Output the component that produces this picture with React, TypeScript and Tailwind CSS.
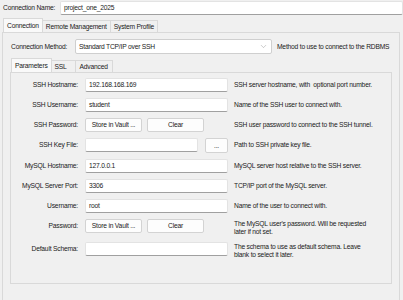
import { ChevronDown } from 'lucide-react';

const rows = [
  { label: 'SSH Hostname:', kind: 'input', value: '192.168.168.169', help: ['SSH server hostname, with  optional port number.'] },
  { label: 'SSH Username:', kind: 'input', value: 'student', help: ['Name of the SSH user to connect with.'] },
  { label: 'SSH Password:', kind: 'vault', help: ['SSH user password to connect to the SSH tunnel.'] },
  { label: 'SSH Key File:', kind: 'file', help: ['Path to SSH private key file.'] },
  { label: 'MySQL Hostname:', kind: 'input', value: '127.0.0.1', help: ['MySQL server host relative to the SSH server.'] },
  { label: 'MySQL Server Port:', kind: 'input', value: '3306', help: ['TCP/IP port of the MySQL server.'] },
  { label: 'Username:', kind: 'input', value: 'root', help: ['Name of the user to connect with.'] },
  { label: 'Password:', kind: 'vault', help: ["The MySQL user's password. Will be requested", 'later if not set.'] },
  { label: 'Default Schema:', kind: 'input', value: '', help: ['The schema to use as default schema. Leave', 'blank to select it later.'] },
];

function TextBox({ value, className }: { value?: string; className?: string }) {
  return (
    <div
      className={`h-[14px] bg-white border border-[#e3e3e3] border-b-[#a0a0a0] rounded-[2px] px-[3px] flex items-center ${className ?? ''}`}
    >
      {value}
    </div>
  );
}

function Button({ label, className }: { label: string; className?: string }) {
  return (
    <div
      className={`h-[14px] bg-[#fdfdfd] border border-[#d3d3d3] rounded-[2px] flex items-center justify-center ${className ?? ''}`}
    >
      {label}
    </div>
  );
}

export default function App() {
  return (
    <div
      className="w-[403px] h-[300px] overflow-hidden bg-[#f0f0f0] text-[6.7px] tracking-[-0.2px] leading-[8px] text-[#1a1a1a] whitespace-nowrap"
      style={{ fontFamily: '"Liberation Sans", Arial, sans-serif' }}
    >
      <div className="flex items-center pt-[1px] pl-[3px]">
        <span className="w-[57px]">Connection Name:</span>
        <TextBox value="project_one_2025" className="flex-1 h-[13px]" />
      </div>

      <div className="flex pl-[3px] mt-[3px] h-[14px] items-end">
        <div className="h-[14px] px-[3px] flex items-center bg-[#f9f9f9] border border-b-0 border-[#d9d9d9]">
          Connection
        </div>
        <div className="h-[12px] px-[3px] flex items-center border-t border-r border-[#d9d9d9]">
          Remote Management
        </div>
        <div className="h-[12px] px-[3px] flex items-center border-t border-r border-[#d9d9d9]">
          System Profile
        </div>
      </div>

      <div className="ml-[2px] mr-[3px] border border-[#d9d9d9] bg-[#f0f0f0] h-[280px]">
        <div className="flex items-center mt-[6px] pl-[8px]">
          <span className="w-[64px]">Connection Method:</span>
          <div className="w-[197px] h-[15px] bg-white border border-[#cfcfcf] rounded-[2px] flex items-center justify-between px-[3px]">
            <span>Standard TCP/IP over SSH</span>
            <ChevronDown size={9} strokeWidth={1} className="text-[#777]" />
          </div>
          <span className="ml-[5px]">Method to use to connect to the RDBMS</span>
        </div>

        <div className="flex pl-[8px] mt-[4px] h-[14px] items-end">
          <div className="h-[14px] px-[3px] flex items-center bg-[#f9f9f9] border border-b-0 border-[#d9d9d9]">
            Parameters
          </div>
          <div className="h-[12px] px-[3px] w-[24px] flex items-center border-t border-r border-[#d9d9d9]">
            SSL
          </div>
          <div className="h-[12px] px-[4px] flex items-center border-t border-r border-[#d9d9d9]">
            Advanced
          </div>
        </div>

        <div className="ml-[7px] mr-[7px] border border-[#d9d9d9] h-[212px] pt-[5px]">
          <div className="flex flex-col gap-[6px]">
            {rows.map((row) => (
              <div key={row.label} className="flex items-start">
                <div className="w-[67px] text-right pt-[3px]">{row.label}</div>
                <div className="w-[143px] ml-[7px] shrink-0">
                  {row.kind === 'input' && <TextBox value={row.value} />}
                  {row.kind === 'vault' && (
                    <div className="flex gap-[5px]">
                      <Button label="Store in Vault ..." className="w-[57px]" />
                      <Button label="Clear" className="w-[57px]" />
                    </div>
                  )}
                  {row.kind === 'file' && (
                    <div className="flex gap-[7px]">
                      <TextBox className="w-[113px]" />
                      <Button label="..." className="w-[23px] h-[15px]" />
                    </div>
                  )}
                </div>
                <div className={row.help.length > 1 ? 'ml-[6px] pt-[1px]' : 'ml-[6px] pt-[3px]'}>
                  {row.help.map((line) => (
                    <div key={line} className="whitespace-pre">{line}</div>
                  ))}
                </div>
              </div>
            ))}
          </div>
        </div>
      </div>
    </div>
  );
}
